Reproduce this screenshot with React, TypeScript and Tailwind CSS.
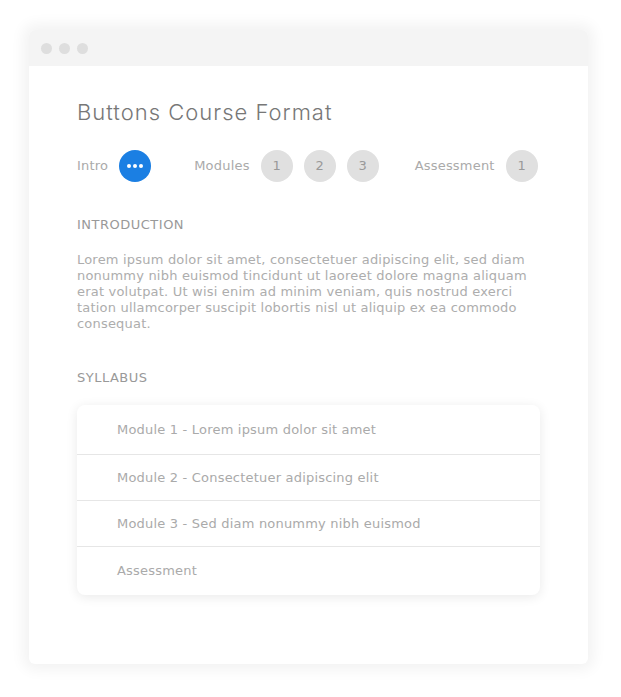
import React from "react";

const font = { fontFamily: "'DejaVu Sans', 'Noto Sans', sans-serif" };
const titleFont = { fontFamily: "Inter, 'Noto Sans', sans-serif" };

function Circle({ children, active }: { children: React.ReactNode; active?: boolean }) {
  return (
    <div
      className={
        "w-8 h-8 rounded-full flex items-center justify-center text-[13px] " +
        (active ? "bg-[#1b7fe3] text-white" : "bg-[#e0e0e0] text-[#999]")
      }
    >
      {children}
    </div>
  );
}

const modules = [
  "Module 1 - Lorem ipsum dolor sit amet",
  "Module 2 - Consectetuer adipiscing elit",
  "Module 3 - Sed diam nonummy nibh euismod",
  "Assessment",
];

export default function App() {
  return (
    <div className="w-[621px] h-[697px] bg-white pt-[30px] pl-[29px]" style={font}>
      <div className="w-[559px] h-[634px] bg-white rounded-md overflow-hidden shadow-[0_0_14px_6px_rgba(0,0,0,0.05)]">
        <div className="h-9 bg-[#f4f4f4] flex items-center gap-[7px] pl-3">
          <span className="w-[11px] h-[11px] rounded-full bg-[#dedede]" />
          <span className="w-[11px] h-[11px] rounded-full bg-[#dedede]" />
          <span className="w-[11px] h-[11px] rounded-full bg-[#dedede]" />
        </div>

        <div className="px-12 pt-8">
          <h1 className="text-[22px] font-light text-[#777] leading-7 tracking-[1px]" style={titleFont}>
            Buttons Course Format
          </h1>

          <div className="flex items-center mt-[24px] h-8 text-[13px] tracking-[0.2px] text-[#aaa]">
            <span className="mr-[11px]">Intro</span>
            <Circle active>
              <span className="flex gap-[2px]">
                <span className="w-[4px] h-[4px] rounded-full bg-white" />
                <span className="w-[4px] h-[4px] rounded-full bg-white" />
                <span className="w-[4px] h-[4px] rounded-full bg-white" />
              </span>
            </Circle>
            <span className="ml-[43px] mr-[11px]">Modules</span>
            <div className="flex gap-[11px]">
              <Circle>1</Circle>
              <Circle>2</Circle>
              <Circle>3</Circle>
            </div>
            <span className="ml-[36px] mr-[11px]">Assessment</span>
            <Circle>1</Circle>
          </div>

          <h2 className="text-[13px] text-[#999] mt-[33px] leading-5 tracking-[0.5px]">INTRODUCTION</h2>
          <p className="text-[13px] text-[#adadad] leading-4 mt-[17px] w-[462px] tracking-[0.2px]">
            Lorem ipsum dolor sit amet, consectetuer adipiscing elit, sed diam nonummy nibh euismod
            tincidunt ut laoreet dolore magna aliquam erat volutpat. Ut wisi enim ad minim veniam, quis
            nostrud exerci tation ullamcorper suscipit lobortis nisl ut aliquip ex ea commodo consequat.
          </p>

          <h2 className="text-[13px] text-[#999] mt-[36px] leading-5 tracking-[0.5px]">SYLLABUS</h2>
          <div className="mt-[17px] w-[463px] bg-white rounded-lg shadow-[0_2px_12px_rgba(0,0,0,0.09)]">
            {modules.map((m, i) => (
              <div
                key={m}
                className={
                  "pl-10 text-[13px] tracking-[0.2px] text-[#aaa] flex items-center " +
                  (i === 0 ? "h-[50px] " : i === modules.length - 1 ? "h-[48px] " : "h-[46px] ") +
                  (i < modules.length - 1 ? "border-b border-[#e6e6e6]" : "")
                }
              >
                {m}
              </div>
            ))}
          </div>
        </div>
      </div>
    </div>
  );
}
